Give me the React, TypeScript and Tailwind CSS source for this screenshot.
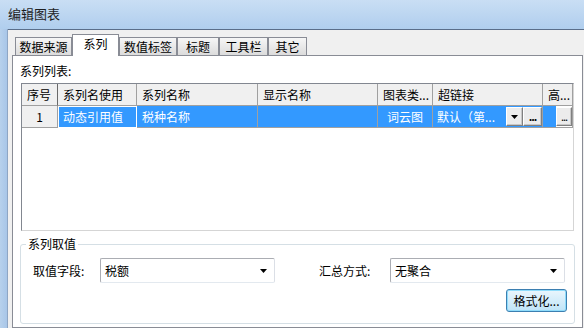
import React from "react";

// 编辑图表 对话框（Win7 风格）
function DownArrow() {
  return (
    <svg width="7" height="4" viewBox="0 0 7 4">
      <path d="M0 0h7L3.5 4z" fill="#000" />
    </svg>
  );
}

const tabs = [
  { label: "数据来源", w: "w-[57px]" },
  { label: "系列", w: "w-[47px]", active: true },
  { label: "数值标签", w: "w-[58px]" },
  { label: "标题", w: "w-[42px]" },
  { label: "工具栏", w: "w-[49px]" },
  { label: "其它", w: "w-[39px]" },
];

const headers = [
  { label: "序号", w: "w-[36px]" },
  { label: "系列名使用", w: "w-[79px]" },
  { label: "系列名称", w: "w-[121px]" },
  { label: "显示名称", w: "w-[120px]" },
  { label: "图表类...", w: "w-[55px]" },
  { label: "超链接", w: "w-[110px]" },
  { label: "高...", w: "w-[30px]" },
];

function CellButton({ children }: { children: React.ReactNode }) {
  return (
    <div className="flex h-[19px] items-center justify-center border border-t-white border-l-white border-r-[#808080] border-b-[#808080] bg-[#ececec] shadow-[inset_-1px_-1px_0_#c8c8c8] leading-none">
      {children}
    </div>
  );
}

function Combo({ value }: { value: string }) {
  return (
    <div className="flex h-[25px] w-[175px] items-center justify-between rounded-[2px] border border-[#abadb3] border-b-[#e3e9ef] border-r-[#dbdfe6] bg-white pl-[4px] pr-[7px] leading-[16px]">
      <span>{value}</span>
      <DownArrow />
    </div>
  );
}

export default function App() {
  return (
    <div className="flex h-[328px] w-[584px] flex-col overflow-hidden font-['Noto_Sans_CJK_SC',sans-serif] text-[12px] text-black">
      <div className="h-[29px] shrink-0 bg-gradient-to-b from-[#c9def4] to-[#b0ceee] pl-[8px] pt-[6px] text-[13px] leading-[16px] text-[#1e1e1e]">
        编辑图表
      </div>
      <div className="flex min-h-0 flex-1">
        <div className="w-[8px] shrink-0 border-r border-[#8ea6c4] bg-gradient-to-r from-[#b7d1ec] to-[#a8c6e8]" />
        <div className="flex min-w-0 flex-1 flex-col border-t border-[#5a6e8a] bg-[#f0f0f0] pl-[4px]">
          {/* 页签 */}
          <div className="flex h-[25px] shrink-0 items-end pl-[3px]">
            {tabs.map((t) =>
              t.active ? (
                <div
                  key={t.label}
                  className={`${t.w} relative z-10 mb-[-1px] flex h-[22px] items-center justify-center border border-b-0 border-[#898c95] bg-white pb-[3px] leading-[16px]`}
                >
                  {t.label}
                </div>
              ) : (
                <div
                  key={t.label}
                  className={`${t.w} flex h-[18px] items-center justify-center border border-b-0 border-[#898c95] bg-gradient-to-b from-[#f6f6f6] to-[#dcdcdc] leading-[16px]`}
                >
                  {t.label}
                </div>
              )
            )}
          </div>
          {/* 页面 */}
          <div className="flex w-[571px] flex-1 flex-col border border-[#898c95] bg-white pl-[7px]">
            <div className="mt-[7px] leading-[16px]">系列列表:</div>
            <div className="ml-[1px] mt-[4px] flex h-[148px] w-[553px] flex-col border border-[#828790] border-b-[#d5d5d5] border-r-[#d5d5d5] bg-white">
              <div className="flex h-[22px] shrink-0">
                {headers.map((h) => (
                  <div
                    key={h.label}
                    className={`${h.w} flex items-center border-b border-r border-[#a0a0a0] bg-[#f0f0f0] pl-[5px] leading-[16px] ${h.label === "序号" ? "border-r-[#696969]" : ""}`}
                  >
                    {h.label}
                  </div>
                ))}
              </div>
              <div className="flex h-[22px] shrink-0 leading-[16px]">
                <div className="flex w-[36px] items-center justify-center border-b border-r border-[#a0a0a0] bg-[#f0f0f0]">
                  1
                </div>
                <div className="flex w-[79px] items-center border border-white bg-[#3399ff] pl-[4px] text-white">
                  动态引用值
                </div>
                <div className="flex w-[121px] items-center border-b border-r border-[#a0a0a0] bg-[#3399ff] pl-[5px] text-white">
                  税种名称
                </div>
                <div className="w-[120px] border-b border-r border-[#a0a0a0] bg-[#3399ff]" />
                <div className="flex w-[55px] items-center justify-center border-b border-r border-[#a0a0a0] bg-[#3399ff] text-white">
                  词云图
                </div>
                <div className="flex w-[110px] items-center border-b border-r border-[#a0a0a0] bg-[#3399ff]">
                  <span className="w-[73px] pl-[4px] text-white">默认（第...</span>
                  <div className="w-[17px]">
                    <CellButton>
                      <DownArrow />
                    </CellButton>
                  </div>
                  <div className="w-[19px]">
                    <CellButton>
                      <span className="text-[11px] font-bold tracking-[-1px]">...</span>
                    </CellButton>
                  </div>
                </div>
                <div className="flex w-[30px] items-center border-b border-r border-[#a0a0a0] bg-white">
                  <div className="h-full w-[13px] bg-[#3399ff]" />
                  <div className="w-[16px]">
                    <CellButton>
                      <span className="text-[11px] tracking-[-1px]">...</span>
                    </CellButton>
                  </div>
                </div>
              </div>
            </div>
            {/* 系列取值 */}
            <fieldset className="mt-[5px] h-[88px] w-[555px] rounded-[3px] border border-[#d5dfe5] pl-[12px] pr-[7px]">
              <legend className="ml-[-7px] px-[2px] leading-[16px]">系列取值</legend>
              <div className="mt-[6px] flex items-center">
                <span className="w-[67px] leading-[16px]">取值字段:</span>
                <Combo value="税额" />
                <span className="ml-[44px] w-[71px] leading-[16px]">汇总方式:</span>
                <Combo value="无聚合" />
              </div>
              <div className="mt-[6px] flex justify-end">
                <button className="h-[23px] w-[61px] rounded-[3px] border border-[#3c7fb1] bg-gradient-to-b from-[#eaf6fd] to-[#bfe4f8] shadow-[inset_0_0_0_1px_#8fdcfb] leading-[16px]">
                  格式化...
                </button>
              </div>
            </fieldset>
          </div>
        </div>
      </div>
    </div>
  );
}
